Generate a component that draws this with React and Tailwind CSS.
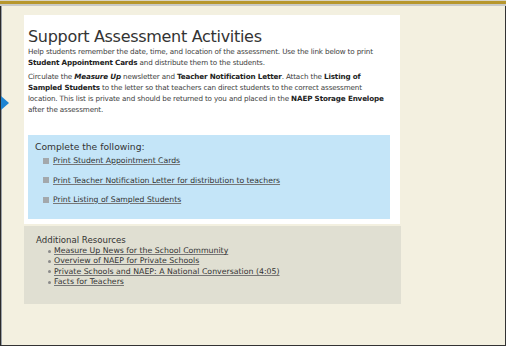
const TASKS = [
  "Print Student Appointment Cards",
  "Print Teacher Notification Letter for distribution to teachers",
  "Print Listing of Sampled Students",
];

const RESOURCES = [
  "Measure Up News for the School Community",
  "Overview of NAEP for Private Schools",
  "Private Schools and NAEP: A National Conversation (4:05)",
  "Facts for Teachers",
];

export default function App() {
  return (
    <div className="w-[506px] h-[346px] bg-[#f3f0e0] flex flex-col overflow-hidden" style={{ fontFamily: '"DejaVu Sans", Verdana, sans-serif' }}>
      {/* top bars */}
      <div className="h-[1px] bg-[#d8d4c4]" />
      <div className="h-[3px] bg-[#b7972d]" />
      <div className="h-[2px] bg-[#c9c9c6]" />

      <div className="flex-1 relative flex border-l border-r border-b border-[#333] border-l-[#2a2a2a]">
        <div className="w-[1px] bg-[#9aa1a8]" />

        {/* left marker */}
        <div className="absolute left-0 top-[90px] w-0 h-0 border-t-[7px] border-b-[7px] border-l-[8px] border-t-transparent border-b-transparent border-l-[#1d84d2]" />

        <div className="flex flex-col pl-[22px] pt-[9px]">
          <div className="w-[376px] bg-white pl-[4px] pr-[12px] pt-[13px] pb-[5px]">
            <h1 className="text-[16px] leading-[18px] tracking-[-0.3px] text-[#333] font-normal">Support Assessment Activities</h1>
            <p className="text-[7.2px] leading-[11px] tracking-[-0.15px] text-[#3d3d3d]">
              Help students remember the date, time, and location of the assessment. Use the link below to print{" "}
              <b className="text-[#222]">Student Appointment Cards</b> and distribute them to the students.
            </p>
            <p className="mt-[3px] text-[7.2px] leading-[11px] tracking-[-0.15px] text-[#3d3d3d]">
              Circulate the <b className="italic text-[#222]">Measure Up</b> newsletter and{" "}
              <b className="text-[#222]">Teacher Notification Letter</b>. Attach the{" "}
              <b className="text-[#222]">Listing of Sampled Students</b> to the letter so that teachers can direct students to the correct assessment location. This list is private and should be returned to you and placed in the{" "}
              <b className="text-[#222]">NAEP Storage Envelope</b> after the assessment.
            </p>

            <div className="mt-[20px] -mr-[2px] bg-[#c4e5f8] pl-[7px] pt-[6px] pb-[14px]">
              <div className="text-[9.2px] leading-[12px] text-[#333]">Complete the following:</div>
              <ul className="mt-[2px] pl-[8px] flex flex-col gap-[8.5px]">
                {TASKS.map((t) => (
                  <li key={t} className="flex items-center gap-[4px]">
                    <span className="w-[6px] h-[6px] bg-[#a3a8ac]" />
                    <a className="text-[7.7px] leading-[11px] text-[#333] underline decoration-[#777]">{t}</a>
                  </li>
                ))}
              </ul>
            </div>
          </div>

          <div className="mt-[2px] w-[377px] h-[78px] bg-[#e0dfd2] pl-[12px] pt-[9px]">
            <div className="text-[8.6px] leading-[11px] text-[#333]">Additional Resources</div>
            <ul className="pl-[12px] flex flex-col">
              {RESOURCES.map((r) => (
                <li key={r} className="flex items-center gap-[3px] h-[10.3px]">
                  <span className="w-[3px] h-[3px] rounded-full bg-[#8a8a8a]" />
                  <a className="text-[7.8px] leading-[10px] text-[#333] underline decoration-[#777]">{r}</a>
                </li>
              ))}
            </ul>
          </div>
        </div>
      </div>
    </div>
  );
}
